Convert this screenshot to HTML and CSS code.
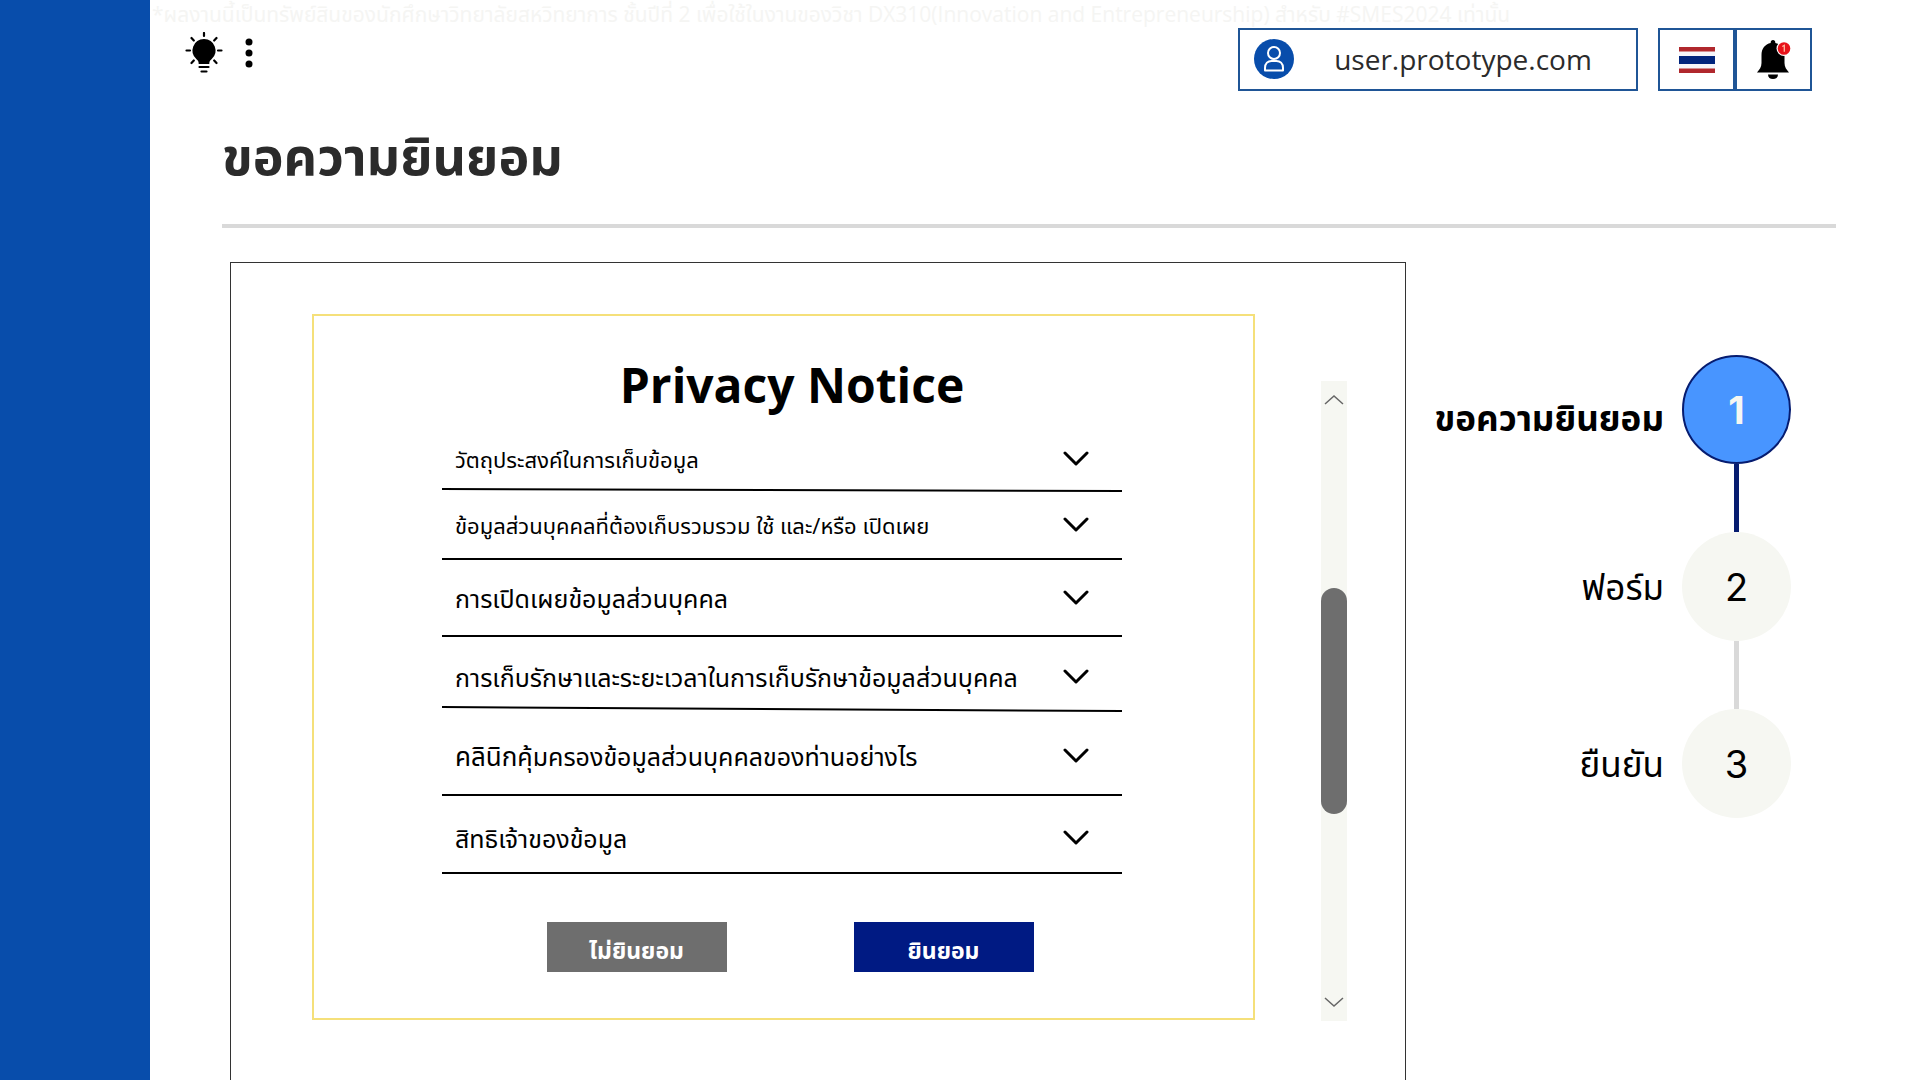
FILE: index.html
```html
<!DOCTYPE html>
<html lang="th">
<head>
<meta charset="utf-8">
<meta name="viewport" content="width=device-width, initial-scale=1">
<title>ขอความยินยอม</title>
<link rel="stylesheet" href="styles.css">
</head>
<body class="app">
<aside class="sidebar"></aside>
<main class="main">
  <p class="watermark">*ผลงานนี้เป็นทรัพย์สินของนักศึกษาวิทยาลัยสหวิทยาการ ชั้นปีที่ 2 เพื่อใช้ในงานของวิชา DX310(Innovation and Entrepreneurship) สำหรับ #SMES2024 เท่านั้น</p>
  <header class="topbar">
    <div class="tools">
      <button class="icon-button" type="button" aria-label="Tips">
        <svg width="38" height="42" viewBox="0 0 38 42">
          <path d="M19 7a11.500 11.500 0 0 1 7.500 20.200c-1.700 1.500-2.200 2.500-2.200 4.800H13.700c0-2.300-.5-3.300-2.200-4.800A11.500 11.500 0 0 1 19 7z"/>
          <path d="M14.500 35h9M16.500 39.500h5M19 1v3M1.500 18.500h3.500M33 18.500h3.500M6.500 6l2.300 2.500M31.500 6l-2.300 2.500M6.500 31l2.300-2.500M31.500 31l-2.300-2.500" fill="none" stroke="#000" stroke-width="2.200" stroke-linecap="round"/>
        </svg>
      </button>
      <button class="icon-button" type="button" aria-label="More">
        <svg width="8" height="30" viewBox="0 0 8 30"><circle cx="4" cy="4" r="3.500"/><circle cx="4" cy="15" r="3.500"/><circle cx="4" cy="26" r="3.500"/></svg>
      </button>
    </div>
    <div class="account">
      <a class="user" href="#">
        <svg class="avatar" width="40" height="40" viewBox="0 0 40 40"><circle cx="20" cy="20" r="20" fill="#084dab"/><g fill="none" stroke="#fff" stroke-width="2"><circle cx="20" cy="14" r="6"/><path d="M11 31.500v-2.500c0-4.500 3-7 6.500-7h5c3.500 0 6.500 2.500 6.500 7v2.500z" stroke-linejoin="round"/></g></svg>
        <span class="user-name">user.prototype.com</span>
      </a>
      <div class="actions">
        <button class="action" type="button" aria-label="ภาษาไทย">
          <svg width="36" height="26" viewBox="0 0 36 26"><path fill="#f5f5fa" d="M0 0h36v26H0z"/><path fill="#b0282d" d="M0 0h36v4.500H0zM0 21.500h36V26H0z"/><path fill="#00247d" d="M0 9h36v8H0z"/></svg>
        </button>
        <button class="action" type="button" aria-label="การแจ้งเตือน">
          <svg width="36" height="40" viewBox="0 0 36 40"><path d="M17 0c1.600 0 2.500 1.200 2.300 3C25 4.300 28.500 8.500 28.500 15v8c0 4 2 6.500 4.500 9.500H1C3.500 29.500 5.500 27 5.500 23v-8C5.500 8.500 9 4.300 14.700 3 14.500 1.200 15.400 0 17 0zM12 34.500h10c0 3-2.200 4.500-5 4.500s-5-1.500-5-4.500z"/><circle cx="28" cy="8.500" r="7.500" fill="#fff"/><circle cx="28" cy="8.500" r="6.300" fill="#e8131b"/><path d="M26.300 6.500l2-1.200v6.400" fill="none" stroke="#ffb9a0" stroke-width="1.300"/></svg>
        </button>
      </div>
    </div>
  </header>
  <h1 class="title">ขอความยินยอม</h1>
  <div class="content">
    <section class="panel">
      <div class="notice">
        <h2 class="notice-title">Privacy Notice</h2>
        <ul class="topics">
          <li class="topic topic-compact"><button class="topic-button" type="button"><span class="topic-name">วัตถุประสงค์ในการเก็บข้อมูล</span><svg class="chevron" viewBox="0 0 26 16"><path d="M2 2l11 11L24 2"/></svg></button><svg class="rule" viewBox="0 0 679 4" preserveAspectRatio="none"><path d="M0 1L679 3"/></svg></li>
          <li class="topic topic-compact"><button class="topic-button" type="button"><span class="topic-name">ข้อมูลส่วนบุคคลที่ต้องเก็บรวมรวม ใช้ และ/หรือ เปิดเผย</span><svg class="chevron" viewBox="0 0 26 16"><path d="M2 2l11 11L24 2"/></svg></button><svg class="rule" viewBox="0 0 679 4" preserveAspectRatio="none"><path d="M0 2H679"/></svg></li>
          <li class="topic"><button class="topic-button" type="button"><span class="topic-name">การเปิดเผยข้อมูลส่วนบุคคล</span><svg class="chevron" viewBox="0 0 26 16"><path d="M2 2l11 11L24 2"/></svg></button><svg class="rule" viewBox="0 0 679 4" preserveAspectRatio="none"><path d="M0 2H679"/></svg></li>
          <li class="topic topic-low"><button class="topic-button" type="button"><span class="topic-name">การเก็บรักษาและระยะเวลาในการเก็บรักษาข้อมูลส่วนบุคคล</span><svg class="chevron" viewBox="0 0 26 16"><path d="M2 2l11 11L24 2"/></svg></button><svg class="rule" viewBox="0 0 679 4" preserveAspectRatio="none"><path d="M0 0L679 4"/></svg></li>
          <li class="topic topic-low"><button class="topic-button" type="button"><span class="topic-name"><span class="clinic">คลินิก</span>คุ้มครองข้อมูลส่วนบุคคลของท่านอย่างไร</span><svg class="chevron" viewBox="0 0 26 16"><path d="M2 2l11 11L24 2"/></svg></button><svg class="rule" viewBox="0 0 679 4" preserveAspectRatio="none"><path d="M0 2H679"/></svg></li>
          <li class="topic topic-low"><button class="topic-button" type="button"><span class="topic-name">สิทธิเจ้าของข้อมูล</span><svg class="chevron" viewBox="0 0 26 16"><path d="M2 2l11 11L24 2"/></svg></button><svg class="rule" viewBox="0 0 679 4" preserveAspectRatio="none"><path d="M0 2H679"/></svg></li>
        </ul>
        <div class="choices">
          <button class="choice" type="button">ไม่ยินยอม</button>
          <button class="choice choice-accept" type="button">ยินยอม</button>
        </div>
      </div>
      <div class="scrollbar">
        <button class="scroll-arrow" type="button" aria-label="Scroll up"><svg width="20" height="12" viewBox="0 0 20 12"><path d="M1 10l9-8 9 8"/></svg></button>
        <div class="scroll-thumb"></div>
        <button class="scroll-arrow" type="button" aria-label="Scroll down"><svg width="20" height="12" viewBox="0 0 20 12"><path d="M1 2l9 8 9-8"/></svg></button>
      </div>
    </section>
    <ol class="steps">
      <li class="step step-current"><span class="step-label">ขอความยินยอม</span><span class="step-number">1</span></li>
      <li class="step"><span class="step-label">ฟอร์ม</span><span class="step-number">2</span></li>
      <li class="step"><span class="step-label">ยืนยัน</span><span class="step-number">3</span></li>
    </ol>
  </div>
</main>
</body>
</html>
```
FILE: styles.css
```css
* { box-sizing: border-box; }

.app {
  display: flex;
  min-height: 100vh;
  margin: 0;
  background: #fff;
  color: #000;
  font-family: "Open Sans", "Noto Sans Thai", "Noto Sans", sans-serif;
}

button { padding: 0; border: 0; background: none; color: inherit; font: inherit; cursor: pointer; }
svg { display: block; }

.sidebar { flex: none; width: 150px; background: #084dab; }

.main { flex: 1; min-width: 0; display: flex; flex-direction: column; }

.watermark {
  height: 28px;
  margin: 0;
  padding-left: 2px;
  overflow: hidden;
  color: #f5f5f3;
  font-size: 21px;
  line-height: 28px;
  white-space: nowrap;
}

.topbar { display: flex; justify-content: space-between; padding: 0 108px 0 35px; }
.tools { display: flex; align-items: center; gap: 22px; height: 50px; }
.account { display: flex; gap: 20px; }

.user {
  display: flex;
  align-items: center;
  width: 400px;
  height: 63px;
  padding: 0 12px 2px 14px;
  border: 2px solid #1f5596;
  color: #2b2b2b;
  font-size: 28px;
  text-decoration: none;
}
.avatar { flex: none; }
.user-name { flex: 1; padding-left: 8px; text-align: center; }

.actions { display: flex; }
.action {
  display: flex;
  align-items: center;
  justify-content: center;
  width: 77px;
  height: 63px;
  border: 2px solid #1f5596;
}

.title {
  margin: 0 84px 0 72px;
  height: 137px;
  padding-top: 28px;
  border-bottom: 4px solid #d9d9d9;
  color: #2b2b2b;
  font-size: 52px;
  line-height: 72px;
}

.content {
  flex: 1;
  display: flex;
  justify-content: space-between;
  padding: 34px 129px 0 80px;
}

.panel {
  flex: 0 1 1176px;
  display: flex;
  align-items: flex-start;
  justify-content: space-between;
  padding: 51px 58px 60px 81px;
  border: 1px solid #333;
  border-bottom: 0;
}

.notice { width: 943px; padding: 36px 131px 46px 128px; border: 2px solid #f5e07a; }
.notice-title { margin: 0 0 12px; padding-left: 20px; font-size: 48px; line-height: 66px; text-align: center; }

.topics {
  display: grid;
  grid-template-rows: 62px 69px 77px 73px 86px 78px;
  margin: 0;
  padding: 0;
  list-style: none;
}
.topic { display: flex; flex-direction: column; }
.topic-button {
  flex: 1;
  display: flex;
  align-items: center;
  justify-content: space-between;
  padding: 0 33px 0 13px;
  font-size: 25px;
  text-align: left;
  white-space: nowrap;
}
.topic-name { padding-top: 4px; }
.topic-compact .topic-button { font-size: 22px; }
.topic-low .topic-button { padding-top: 8px; }
.clinic { font-size: 26px; }
.chevron { flex: none; width: 26px; height: 16px; fill: none; stroke: #000; stroke-width: 3; stroke-linecap: round; stroke-linejoin: round; }
.rule { width: 100%; height: 4px; overflow: visible; fill: none; stroke: #000; stroke-width: 2; }

.choices { display: flex; justify-content: center; gap: 127px; padding-left: 16px; margin-top: 47px; }
.choice { width: 180px; height: 50px; padding-top: 6px; background: #6e6e6e; color: #fff; font-size: 23px; line-height: 32px; font-weight: 700; }
.choice-accept { background: #001a83; }

.scrollbar {
  display: flex;
  flex-direction: column;
  justify-content: space-between;
  align-items: center;
  width: 26px;
  height: 640px;
  margin-top: 67px;
  padding: 13px 0;
  background: #f6f7f2;
}
.scroll-arrow { fill: none; stroke: #666; stroke-width: 1.5; }
.scroll-thumb { width: 26px; height: 226px; border-radius: 13px; background: #6e6e6e; }

.steps { display: flex; flex-direction: column; gap: 68px; margin: 93px 0 0; padding: 0; list-style: none; }
.step { position: relative; display: flex; align-items: center; justify-content: flex-end; gap: 18px; font-size: 35px; line-height: 48px; }
.step-number {
  display: flex;
  align-items: center;
  justify-content: center;
  width: 109px;
  height: 109px;
  border-radius: 50%;
  background: #f6f7f2;
  font-family: Inter, sans-serif;
  font-size: 38px;
}
.step-current .step-label { padding-top: 16px; font-weight: 700; }
.step-current .step-number { border: 2px solid #061c70; background: #4895ff; color: #f6f7f2; font-weight: 700; }

/* connector down to the next step */
.step:not(:last-child)::after {
  content: "";
  position: absolute;
  top: 100%;
  right: 52px;
  width: 5px;
  height: 68px;
  background: #d9d9d9;
}
.step-current:not(:last-child)::after { background: #061c70; }
```
